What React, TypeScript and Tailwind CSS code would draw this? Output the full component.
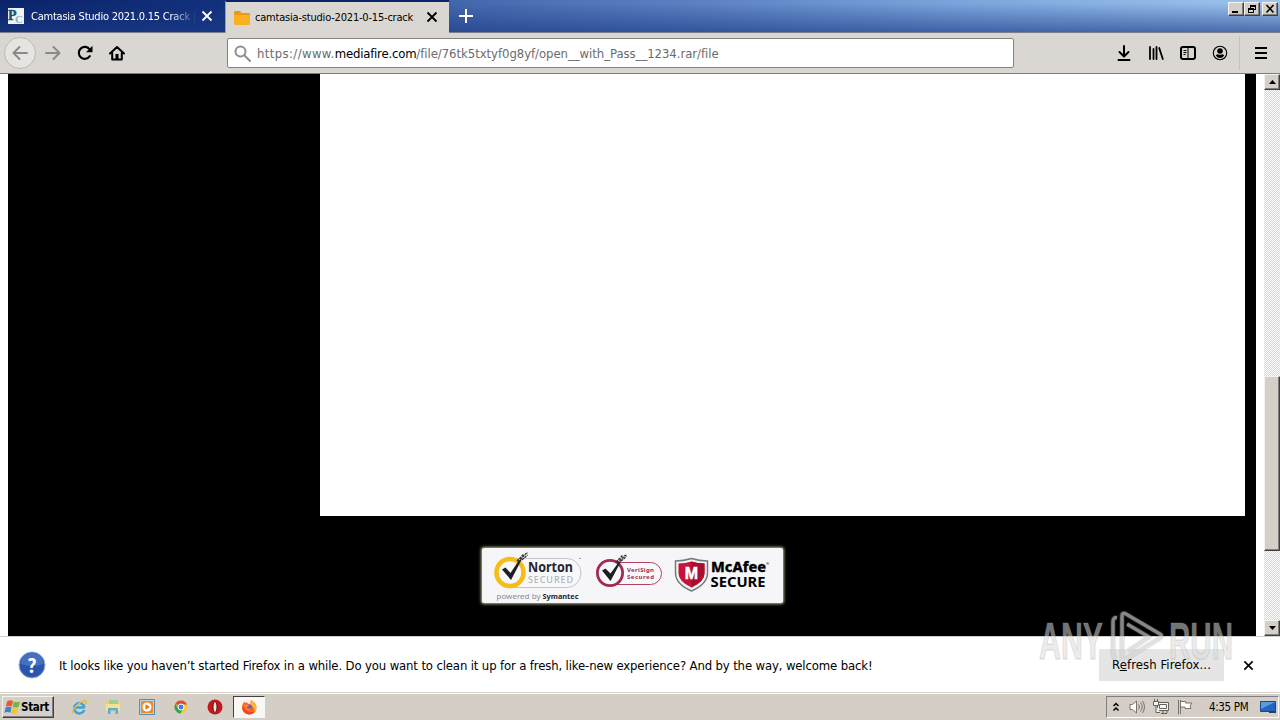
import type { ReactNode } from "react";

const ui = "[font-family:'DejaVu_Sans_Condensed','DejaVu_Sans',sans-serif] [font-stretch:condensed]";

function Close({ className }: { className: string }) {
  return (
    <svg viewBox="0 0 12 12" className={className} fill="none" stroke="currentColor" strokeWidth="1.8">
      <path d="M1.5 1.5l9 9M10.5 1.5l-9 9" />
    </svg>
  );
}

const raised =
  "border border-t-[#f4f2ee] border-l-[#f4f2ee] border-r-[#404040] border-b-[#404040] bg-[#d4d0c8] shadow-[inset_-1px_-1px_0_#808080]";

function WinButton({ children }: { children: ReactNode }) {
  return (
    <div className={`flex h-[14px] w-4 items-center justify-center ${raised}`}>
      <svg viewBox="0 0 12 10" className="h-[10px] w-3" fill="none" stroke="#000" shapeRendering="crispEdges">
        {children}
      </svg>
    </div>
  );
}

function TitleBar() {
  return (
    <header className="relative flex h-[33px] shrink-0 border-b border-[#7b7f8c] bg-[linear-gradient(90deg,#0a246a_0%,#12307c_17%,#4468ad_36%,#5c82c2_55%,#7ba5dc_75%,#9cc4ee_100%)]">
      <div className="absolute inset-x-0 top-0 h-8 bg-[linear-gradient(180deg,transparent_10%,#1c3a86_110%)] opacity-70" />
      <div className="relative flex h-8 w-[225px] items-center pl-2">
        <svg viewBox="0 0 16 16" className="h-4 w-4 shrink-0" fontFamily="'Liberation Serif',serif" fontWeight="700">
          <path fill="#eef3f5" d="M0 0h16v16H0z" />
          <text x="7" y="14.500" fontSize="11" fill="#8facb9">C</text>
          <text x="0" y="11.500" fontSize="14" fill="#1c4f74" stroke="#1c4f74" strokeWidth=".4">P</text>
        </svg>
        <span className="mt-[2px] ml-[7px] w-[166px] overflow-hidden text-[11px] leading-4 tracking-[-0.23px] whitespace-nowrap text-white [mask-image:linear-gradient(90deg,#000_84%,transparent)]">
          Camtasia Studio 2021.0.15 Crack |
        </span>
        <Close className="ml-1 h-3 w-3 shrink-0 text-white" />
      </div>
      <div className="relative flex h-[33px] w-[224px] shrink-0 items-center border-t-2 border-l border-t-[#0a246a] border-l-[#9a9fae] bg-[#dad7d2] pl-2">
        <svg viewBox="0 0 16 16" className="h-4 w-4 shrink-0">
          <path fill="#e79a16" d="M0 2q0-1 1-1h5l1.5 2H15q1 0 1 1v3H0z" />
          <path fill="#f9b11f" d="M0 5h16v9q0 1-1 1H1q-1 0-1-1z" />
        </svg>
        <span className="ml-[5px] w-[160px] text-[11px] leading-4 tracking-[-0.2px] whitespace-nowrap text-black">
          camtasia-studio-2021-0-15-crack
        </span>
        <Close className="-mt-[2px] ml-[11px] h-3 w-3 shrink-0 text-black" />
      </div>
      <svg viewBox="0 0 14 14" className="relative mt-[9px] ml-[10px] h-[14px] w-[14px]" stroke="#fff" strokeWidth="2">
        <path d="M7 0v14M0 7h14" />
      </svg>
      <div className="relative mt-[2px] mr-[2px] ml-auto flex">
        <WinButton>
          <path strokeWidth="2" d="M2 8h6" />
        </WinButton>
        <WinButton>
          <path d="M4.5 4V1.500h5v4h-2M4 2h6M2 5h6M2.500 5v3.500h5V4.500h-5z" />
        </WinButton>
        <div className="w-[2px]" />
        <WinButton>
          <path strokeWidth="1.6" shapeRendering="auto" d="M2.500 1l7 7.500M9.500 1l-7 7.500" />
        </WinButton>
      </div>
    </header>
  );
}

function Toolbar() {
  return (
    <div className="flex h-[41px] shrink-0 items-center border-b border-[#7e7c78] bg-[#dad7d2] text-black">
      <div className="ml-1 flex h-8 w-8 items-center justify-center rounded-full border border-[#bdbab6] bg-[#e6e4e1]">
        <svg viewBox="0 0 16 16" className="h-4 w-4" fill="none" stroke="#8b8986" strokeWidth="2" strokeLinecap="round" strokeLinejoin="round">
          <path d="M15 8H1.500M7.500 2l-6 6 6 6" />
        </svg>
      </div>
      <svg viewBox="0 0 16 16" className="ml-[9px] h-4 w-4" fill="none" stroke="#8b8986" strokeWidth="2" strokeLinecap="round" strokeLinejoin="round">
        <path d="M1 8h13.500M8.500 2l6 6-6 6" />
      </svg>
      <svg viewBox="0 0 16 16" className="ml-4 h-4 w-4" fill="none" stroke="#000" strokeWidth="2.100" strokeLinecap="round">
        <path d="M12.800 11.200A6 6 0 1 1 12.800 4.500" />
        <path fill="#000" stroke="none" d="M15.500 .8v6.500H9z" />
      </svg>
      <svg viewBox="0 0 16 16" className="ml-4 h-4 w-4" fill="none" stroke="#000" strokeWidth="2" strokeLinecap="round" strokeLinejoin="round">
        <path d="M1 8.500l7-6.500 7 6.500M3.200 8v6.500h9.600V8" />
        <path fill="#000" stroke="none" d="M6.500 9h3v5h-3z" />
      </svg>
      <div className="ml-[102px] flex h-[30px] w-[787px] items-center rounded-[2px] border border-[#85837f] bg-white pl-[6px]">
        <svg viewBox="0 0 17 17" className="h-[17px] w-[17px]" fill="none" stroke="#8e8e8e" strokeWidth="2">
          <circle cx="6.500" cy="6.500" r="5" />
          <path d="M10.300 10.300l5.700 5.700" strokeLinecap="round" />
        </svg>
        <div className="mt-[2px] ml-[6px] flex text-[13px] leading-4 whitespace-nowrap text-[#6b6b6b]">
          <span className="tracking-[0.38px]">https://www.</span>
          <span className="tracking-[-0.2px] text-black">mediafire.com</span>
          <span className="tracking-[-0.05px]">/file/76tk5txtyf0g8yf/open__with_Pass__1234.rar/file</span>
        </div>
      </div>
      <div className="ml-auto flex items-center gap-4">
        <svg viewBox="0 0 16 16" className="h-4 w-4" fill="none" stroke="#000" strokeWidth="2" strokeLinecap="round" strokeLinejoin="round">
          <path d="M8 1v10M3.500 7L8 11.500 12.500 7M2.500 15h11" />
        </svg>
        <svg viewBox="0 0 16 16" className="h-4 w-4" fill="none" stroke="#000" strokeWidth="1.800" strokeLinecap="round">
          <path d="M2 2v12M5.500 4v10M8.500 2v12M11.200 3l3.600 11" />
        </svg>
        <svg viewBox="0 0 16 16" className="h-4 w-4" fill="none" stroke="#000">
          <rect x="1" y="2" width="14" height="12" rx="2" strokeWidth="2" />
          <path d="M8 2v12M3.500 5.500h3M3.500 7.500h3M3.500 9.500h2" />
        </svg>
        <svg viewBox="0 0 16 16" className="h-4 w-4">
          <circle cx="8" cy="8" r="6.700" fill="none" stroke="#000" strokeWidth="1.100" />
          <circle cx="8" cy="6" r="2.800" />
          <path d="M3.800 10.500Q4.500 9.200 6 9.200q2 1 4 0 1.500 0 2.200 1.300-1.700 2.500-4.200 2.500t-4.200-2.500z" />
        </svg>
      </div>
      <div className="ml-[11px] h-[34px] w-px bg-[#c6c3be]" />
      <svg viewBox="0 0 16 16" className="mr-[11px] ml-[13px] h-4 w-4" stroke="#000" strokeWidth="2">
        <path d="M2 3h12M2 8h12M2 13h12" />
      </svg>
    </div>
  );
}

function ScrollButton({ d }: { d: string }) {
  return (
    <div className={`flex h-4 w-4 shrink-0 items-center justify-center ${raised}`}>
      <svg viewBox="0 0 7 4" className="h-1 w-[7px]">
        <path d={d} />
      </svg>
    </div>
  );
}

function Badges() {
  return (
    <div className="mt-8 ml-[474px] h-[55px] w-[301px] rounded-[2px] bg-[#f6f6f8] shadow-[0_0_3px_1px_#b9b98c]">
      <svg viewBox="482 548 301 55" className="h-[55px] w-[301px]" fontFamily="'Noto Sans','Open Sans',sans-serif">
        <rect x="500" y="558.500" width="81" height="29" rx="14.500" fill="#f8f8fa" stroke="#c3c3c9" />
        <circle cx="510" cy="572.500" r="13.500" fill="#f8f8fa" stroke="#f6bd16" strokeWidth="4.600" />
        <path d="M502 569.500l3.500-2 5 5.500 8-12 3.500-2L511 580z" fill="#1d1d25" />
        <path d="M518 562l8-8.500 2-.5M517 561l7-7M522 560l5.500-5" stroke="#333" strokeWidth="1.300" strokeDasharray="2.500 .8" fill="none" />
        <text x="528" y="572" fontSize="13.500" fontWeight="700" fill="#25252d" textLength="45" lengthAdjust="spacingAndGlyphs">Norton</text>
        <text x="528" y="583" fontSize="9" fontWeight="500" fill="#b0b0b8" textLength="45">SECURED</text>
        <path d="M579 558.500h2" stroke="#999" />
        <text x="496.500" y="599" fontSize="7.500" fill="#8b8b95" textLength="44" lengthAdjust="spacingAndGlyphs">powered by</text>
        <text x="542.500" y="599" fontSize="7.500" fontWeight="700" fill="#25252d" textLength="36" lengthAdjust="spacingAndGlyphs">Symantec</text>

        <rect x="606" y="562.500" width="55.500" height="22" rx="11" fill="#f8f8fa" stroke="#b04264" />
        <circle cx="610" cy="573" r="12.600" fill="#f8f8fa" stroke="#a22a50" strokeWidth="2.800" />
        <path d="M602 570.500l3.500-2 5 5 8-11 3-2L610.500 581z" fill="#1d1d25" />
        <path d="M617 563l8-7.500 2-.5M616 562l7-7M621 561l5.500-4.500" stroke="#333" strokeWidth="1.300" strokeDasharray="2.500 .8" fill="none" />
        <text x="627" y="571.800" fontSize="6" fontWeight="700" fill="#a22a50" textLength="27">VeriSign</text>
        <text x="627" y="578.500" fontSize="6" fontWeight="700" fill="#a22a50" textLength="27">Secured</text>

        <path d="M675.500 561q8 0 16-2.500 8 2.500 16 2.500v12q0 11-16 18-16-7-16-18z" fill="#f3f3f3" stroke="#747b7d" strokeWidth="1.500" />
        <path d="M678.500 563.500q7 0 13-2 6 2 13 2v10q0 8-13 14-13-6-13-14z" fill="#c4123a" />
        <path d="M691.500 561.500q6 2 13 2v10q0 8-13 14z" fill="#a90e31" />
        <text x="691.500" y="579" fontSize="16" fontWeight="800" textAnchor="middle" fill="#fff" stroke="#fff" strokeWidth=".5" fontFamily="'Liberation Sans',sans-serif">M</text>
        <text x="711" y="571.500" fontSize="14.500" fontWeight="800" fill="#000" stroke="#000" strokeWidth=".3" textLength="55" lengthAdjust="spacingAndGlyphs">McAfee</text>
        <text x="766" y="565" fontSize="4" fill="#000">®</text>
        <text x="710.500" y="587" fontSize="13.500" fontWeight="700" fill="#000" textLength="55" lengthAdjust="spacingAndGlyphs">SECURE</text>
      </svg>
    </div>
  );
}

function Page() {
  return (
    <main className="flex h-[562px] shrink-0 bg-white pl-2">
      <div className="w-[1248px] bg-black">
        <div className="ml-[312px] h-[442px] w-[925px] bg-white" />
        <Badges />
      </div>
      <div className="ml-2 flex w-4 flex-col bg-[#f1efeb] bg-[conic-gradient(#d8d5cf_25%,#fff_0_50%,#d8d5cf_0_75%,#fff_0)] bg-[size:2px_2px]">
        <ScrollButton d="M3.500 0L7 4H0z" />
        <div className={`mt-[286px] h-[175px] w-4 ${raised}`} />
        <div className="mt-auto">
          <ScrollButton d="M0 0h7L3.500 4z" />
        </div>
      </div>
    </main>
  );
}

function Notification() {
  return (
    <div className="flex h-[57px] shrink-0 items-center border-t border-[#cfcfcf] bg-white">
      <svg viewBox="0 0 28 28" className="ml-[18px] h-7 w-7 shrink-0">
        <circle cx="14" cy="14" r="13" fill="#2b55ad" stroke="#9aaed6" />
        <path d="M2.500 13a11.500 11.500 0 0 1 23 0q-11 4-23 0z" fill="#4570c2" />
        <text x="14" y="22" fontSize="22" fontWeight="700" textAnchor="middle" fill="#fff" fontFamily="'Open Sans','Liberation Sans',sans-serif">?</text>
      </svg>
      <span className="mt-[2px] ml-[13px] text-[13px] leading-4 tracking-[-0.14px] whitespace-nowrap text-black">
        It looks like you haven’t started Firefox in a while. Do you want to clean it up for a fresh, like-new experience? And by the way, welcome back!
      </span>
      <button className="mr-[19px] ml-auto h-8 w-[125px] bg-[#e5e5e5] text-[13px] tracking-[0.08px] whitespace-nowrap text-black">
        R<u>e</u>fresh Firefox...
      </button>
      <Close className="mr-[26px] h-[11px] w-[11px] text-black" />
    </div>
  );
}

function Watermark() {
  const mark =
    "M1117 618q-4-1-4 4v30q0 5 3 7M1122 661v-45q0-4 4-2l34 20q3 2 0 4l-34 21M1127 624l22 13-21 14";
  return (
    <svg viewBox="1034 606 202 64" className="pointer-events-none absolute top-[606px] left-[1034px] h-16 w-[202px]" fill="none" strokeLinejoin="round">
      <g fontFamily="'Liberation Sans',sans-serif" fontSize="52" fontWeight="700" fill="#dcdcdc" fillOpacity=".55" stroke="#909090" strokeOpacity=".22" strokeWidth="1.500">
        <text x="1039" y="659" textLength="64" lengthAdjust="spacingAndGlyphs">ANY</text>
        <text x="1169" y="659" textLength="64" lengthAdjust="spacingAndGlyphs">RUN</text>
      </g>
      <path d={mark} stroke="#909090" strokeOpacity=".22" strokeWidth="5.500" />
      <path d={mark} stroke="#dcdcdc" strokeOpacity=".55" strokeWidth="3.500" />
    </svg>
  );
}

function TaskIcon({ children }: { children: ReactNode }) {
  return (
    <svg viewBox="0 0 16 16" className="h-4 w-4 shrink-0">
      {children}
    </svg>
  );
}

function Flag() {
  return (
    <svg viewBox="0 0 16 14" className="h-[15px] w-[17px]">
      <path fill="#e8592b" d="M3 1q3-1.500 5.500 0L7.300 6Q4.500 5 1.800 6z" />
      <path fill="#73b742" d="M9.300 1.400q2.700 1.300 5.700 0L13.700 6.500q-3 1.200-5.500 0z" />
      <path fill="#3b82cf" d="M1.600 7q2.700-1.200 5.500 0L6 12q-2.800-1.300-5.600 0z" />
      <path fill="#f6c52c" d="M8 7.500q2.600 1.200 5.500 0L12.200 12.500q-3 1.200-5.400 0z" />
    </svg>
  );
}

function Taskbar() {
  return (
    <footer className="flex h-[27px] shrink-0 items-center border-t border-white bg-[#d4cec6] shadow-[0_-1px_0_#d6d3cd]">
      <div className={`ml-[2px] flex h-[22px] w-[52px] items-center pl-[1px] ${raised}`}>
        <Flag />
        <span className="text-[11.500px] leading-4 font-bold tracking-[-0.3px] text-black">Start</span>
      </div>
      <div className="ml-[17px] flex items-center gap-[18px]">
        <TaskIcon>
          <path d="M13.500 8.500h-9M13.300 10.800A5.200 5.200 0 1 1 13.500 8.500" fill="none" stroke="#39a3df" strokeWidth="2.400" />
          <path d="M2 14.500C-1 12 9 2 14 1.500c2.500 0 1.500 3 .5 4" fill="none" stroke="#e8bb3c" strokeWidth="1.300" />
        </TaskIcon>
        <TaskIcon>
          <path d="M1 3l1-1.500h4L7 3h7.500v10H1z" fill="#efcf6c" />
          <path d="M4 1h9v4H4z" fill="#9fd195" />
          <path d="M1 5h14v7H1z" fill="#f7e08e" />
          <path d="M3 15v-5q0-1 1-1h8q1 0 1 1v5h-2.500v-3.500h-5V15z" fill="#5badd9" />
        </TaskIcon>
        <TaskIcon>
          <path d="M.5.5h15v15H.5z" fill="#b4d4ef" stroke="#4f8dc6" />
          <rect x="2" y="2" width="12" height="12" rx="1" fill="#f08c1a" />
          <circle cx="8" cy="8" r="4.500" fill="#fff" />
          <path d="M6.500 5.300L11 8l-4.500 2.700z" fill="#e0760c" />
        </TaskIcon>
        <TaskIcon>
          <circle cx="8" cy="8" r="6.500" fill="#f8ca34" />
          <path d="M8 8L2.300 4.800A6.500 6.500 0 0 1 14 5.500H8z" fill="#dd4a3b" />
          <path d="M2.300 4.800A6.500 6.500 0 0 0 7.500 14.500L10 10 8 8 5 8.500z" fill="#36a255" />
          <circle cx="8" cy="8" r="3" fill="#3d7fe6" stroke="#fff" />
        </TaskIcon>
        <TaskIcon>
          <circle cx="8" cy="8" r="7.500" fill="#c01a20" />
          <ellipse cx="8" cy="8" rx="2" ry="5.500" fill="#f2e4e2" stroke="#74070c" />
        </TaskIcon>
      </div>
      <div className="ml-[10px] flex h-[22px] w-8 items-center justify-center border border-t-[#404040] border-r-[#f8f8f8] border-b-[#f8f8f8] border-l-[#404040] bg-[#f8f7f5]">
        <TaskIcon>
          <path d="M8 15.500A7 7 0 0 1 1 8.500C1 6 2 4 3.500 2.500L4 4l2-1c0 2 2 1 3 3l1-5c3 2 5.500 4 5.500 8A7.300 7.300 0 0 1 8 15.500z" fill="#fb6a23" />
          <path d="M10 1c3 2 5.500 4 5.500 8q0 3-2 4.800Q14 8 9 6z" fill="#ffb52c" />
          <path d="M1 8.500q1 6 7 7 4 0 6-3-9 2-11-4z" fill="#f5402f" />
          <circle cx="8" cy="8" r="2.800" fill="#7f45d4" />
          <path d="M3.500 6q3-1 5 0-1 2-3 2 1 2.500 5 1-3 3.500-6 1.500z" fill="#ff8a1c" />
        </TaskIcon>
      </div>
      <div className="mr-[1px] ml-auto flex h-[22px] w-[173px] items-center border border-t-[#808080] border-r-white border-b-white border-l-[#808080]">
        <svg viewBox="0 0 8 11" className="ml-[5px] h-[11px] w-2" fill="none" stroke="#000" strokeWidth="1.500">
          <path d="M1.500 4L4 1.500 6.500 4M1.500 8.500L4 6l2.500 2.500" />
        </svg>
        <svg viewBox="0 0 16 16" className="ml-[9px] h-4 w-4" fill="#fff" stroke="#77746f">
          <path d="M1 5.500h2.500L7.500 2v12l-4-3.500H1z" />
          <path d="M9.500 5.500q2 2.500 0 5M11.500 3.500q3.500 4.500 0 9M13.500 2q4 6 0 12" fill="none" />
        </svg>
        <svg viewBox="0 0 16 16" className="ml-2 h-4 w-4" fill="#f5f5f5" stroke="#65625d">
          <path d="M4.500 3.500h11v8h-11zM6.500 5.500h7v4h-7zM8 14.500h6M10 12v2M14 12v2" />
          <path d="M.5 2.500h5v4h-5zM1.500 0v2M4.500 0v2M3 6.500v7h4" />
        </svg>
        <svg viewBox="0 0 16 16" className="ml-2 h-4 w-4" fill="#fff" stroke="#77746f">
          <path d="M1.500 1v14.500M3.500 15V1M3.500 2.500h5v1.500h6.500l-2 3 1 2.500h-6V8h-4.500" />
        </svg>
        <span className="ml-4 text-[11.500px] leading-4 tracking-[-0.35px] whitespace-nowrap text-black">4:35 PM</span>
        <svg viewBox="0 0 17 13" className="mr-[1px] ml-auto h-[13px] w-[17px]">
          <path d="M.5.500h15v10H.5z" fill="#2365c0" stroke="#174888" />
          <path d="M1 1h14L1 8z" fill="#5b9bdf" />
          <path d="M9 10h7v2H9z" fill="#263e60" />
        </svg>
      </div>
    </footer>
  );
}

export default function App() {
  return (
    <div className={`relative flex h-[720px] w-[1280px] flex-col overflow-hidden bg-white ${ui}`}>
      <TitleBar />
      <Toolbar />
      <Page />
      <Notification />
      <Taskbar />
      <Watermark />
    </div>
  );
}
